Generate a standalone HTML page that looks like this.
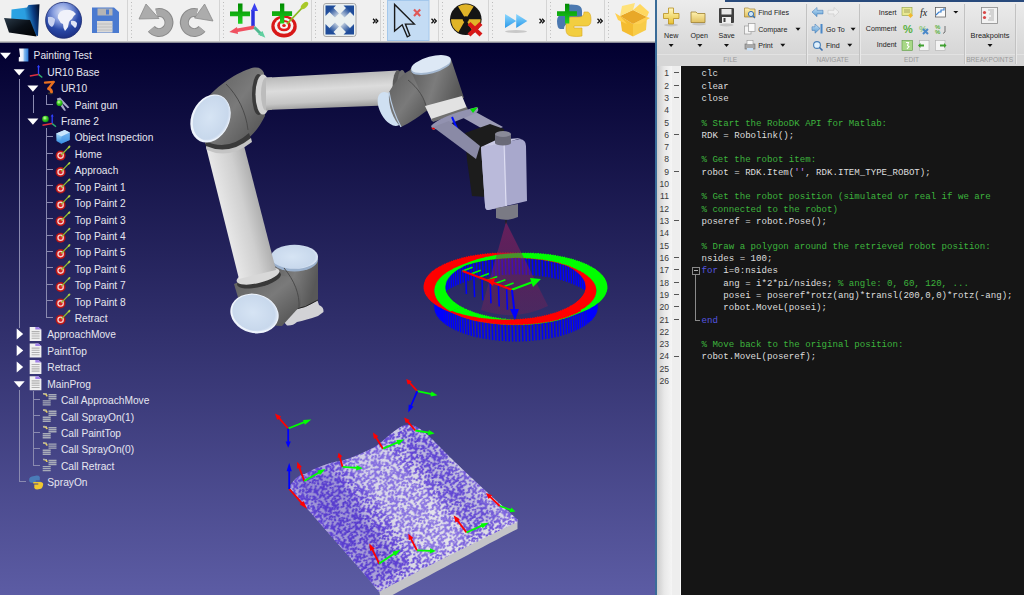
<!DOCTYPE html>
<html><head><meta charset="utf-8">
<style>
*{margin:0;padding:0;box-sizing:border-box}
html,body{width:1024px;height:595px;overflow:hidden;background:#000;font-family:"Liberation Sans",sans-serif}
#left{position:absolute;left:0;top:0;width:655px;height:595px;overflow:hidden}
#tb{position:absolute;left:0;top:0;width:655px;height:43px;background:#f0f0f0}
#view{position:absolute;left:0;top:0}
#tree{position:absolute;left:0;top:0;color:#e6e6f0;font-size:10.2px}
#tree .r{position:absolute;white-space:nowrap;line-height:12px}
#sep{position:absolute;left:655px;top:0;width:2px;height:595px;background:#3a6c98}
#ml{position:absolute;left:657px;top:0;width:367px;height:595px;overflow:hidden}
#mtb{position:absolute;left:0;top:0;width:367px;height:66px;background:linear-gradient(#ececec,#d6d6d6 82%,#cdcdcd 82%,#d2d2d2)}
#code{position:absolute;left:0;top:66px;width:367px;height:529px;background:#151515}
#gut{position:absolute;left:0;top:0;width:24px;height:529px;background:linear-gradient(90deg,#cccccc,#e8e8e8 30%,#f6f6f6 64%,#eeeeee 64%,#eeeeee 95%,#fafafa 95%)}
.ln{position:absolute;right:355px;font-size:8.6px;color:#3a3a3a;line-height:12px;text-align:right}
.dash{position:absolute;left:17px;width:5px;height:1px;background:#555}
.cl{position:absolute;left:44.5px;font-family:"Liberation Mono",monospace;font-size:9.1px;color:#dedede;white-space:pre;line-height:12px}
.cm{color:#3db43d}
.kw{color:#5656e0}
.st{color:#c080f0}
</style></head><body>
<div id="left">
<svg id="view" width="655" height="595" viewBox="0 0 655 595">
<defs>
<linearGradient id="bg" x1="0" y1="0" x2="0" y2="1">
<stop offset="0" stop-color="#020030"/>
<stop offset="1" stop-color="#5c5ca4"/>
</linearGradient>
</defs>
<rect x="0" y="43" width="655" height="552" fill="url(#bg)"/>
<path d="M379 590 C420 568 480 538 517.5 519.5 L517.5 529 C480 548 420 581 381 601 Z" fill="#c4c4c8"/>
<defs><pattern id="dotpat" patternUnits="userSpaceOnUse" width="40" height="40" patternTransform="rotate(-25)"><rect width="40" height="40" fill="#e0e0e6"/><path d="M18.1 22.4h.6M37.0 18.6h.6M20.3 23.5h.6M7.4 20.5h.6M25.2 31.7h.6M3.8 12.1h.6M3.6 32.4h.6M27.7 1.7h.6M39.3 38.6h.6M26.2 24.6h.6M6.3 0.6h.6M21.1 2.4h.6M7.6 9.7h.6M1.2 18.6h.6M17.6 33.7h.6M20.8 25.6h.6M20.0 26.5h.6M18.3 11.1h.6M39.9 39.8h.6M33.6 28.3h.6M12.6 9.2h.6M11.6 2.8h.6M30.7 16.0h.6M33.9 15.5h.6M38.3 33.9h.6M0.0 8.4h.6M36.4 18.8h.6M39.2 15.9h.6M2.9 25.2h.6M31.1 10.8h.6M3.5 13.3h.6M38.6 30.3h.6M4.7 9.9h.6M4.0 2.4h.6M31.9 7.1h.6M22.4 17.9h.6M7.6 29.3h.6M5.2 25.7h.6M4.7 16.8h.6M8.5 10.8h.6M38.8 32.1h.6M12.2 35.4h.6M8.4 15.8h.6M34.2 25.7h.6M4.0 39.6h.6M8.5 10.3h.6M30.9 13.2h.6M11.9 2.9h.6M3.6 23.3h.6M9.7 24.1h.6M14.9 18.1h.6M38.4 19.3h.6M23.0 34.7h.6M7.3 6.2h.6M36.3 32.7h.6M10.0 7.6h.6M29.6 37.6h.6M7.9 38.0h.6M35.3 24.1h.6M16.9 4.2h.6M1.5 38.5h.6M9.5 28.2h.6M10.3 32.9h.6M23.9 11.7h.6M7.0 28.8h.6M2.8 9.1h.6M22.4 34.1h.6M24.6 11.2h.6M36.7 8.2h.6M0.7 10.8h.6M17.8 2.4h.6M7.1 14.8h.6M22.9 5.3h.6M14.5 35.6h.6M39.2 26.3h.6M27.6 23.4h.6M5.6 1.4h.6M0.7 36.4h.6M28.0 38.5h.6M0.9 25.4h.6M19.3 29.2h.6M12.8 40.0h.6M3.0 21.8h.6M29.5 36.0h.6M29.5 28.1h.6M31.7 36.6h.6M14.1 27.4h.6M36.0 34.8h.6M16.7 31.6h.6M34.5 22.9h.6M25.0 15.3h.6M23.3 24.4h.6M3.2 25.6h.6M39.7 35.2h.6M29.1 15.5h.6M29.4 23.2h.6M17.6 33.5h.6M3.4 30.0h.6M1.2 24.1h.6M19.2 9.2h.6M27.9 19.9h.6M24.6 36.8h.6M10.2 0.5h.6M12.0 27.1h.6M8.1 6.8h.6M36.2 26.4h.6M17.7 35.7h.6M13.1 26.6h.6M7.9 17.2h.6M32.2 36.6h.6M35.2 15.4h.6M23.3 12.7h.6M5.4 19.9h.6M33.5 33.9h.6M28.4 38.0h.6M11.1 6.8h.6M18.0 11.0h.6M8.6 16.6h.6M25.0 19.8h.6M12.6 33.6h.6M39.3 18.1h.6M3.0 1.3h.6M34.9 1.7h.6M28.3 22.8h.6M12.4 31.7h.6M0.8 5.4h.6M18.2 1.0h.6M33.2 9.5h.6M5.6 1.9h.6M25.2 17.9h.6M25.2 26.2h.6M32.3 38.3h.6M27.4 8.0h.6M19.0 7.1h.6M0.4 18.9h.6M28.6 7.2h.6M10.9 13.8h.6M27.9 20.8h.6M24.6 30.2h.6M15.7 31.7h.6M36.2 3.5h.6M37.3 28.9h.6M5.2 18.1h.6M25.0 36.4h.6M15.1 22.8h.6M35.2 31.9h.6M37.8 18.5h.6M26.1 8.2h.6M28.9 32.7h.6M25.7 28.7h.6M8.5 36.0h.6M39.2 39.1h.6M21.5 31.6h.6M12.8 36.4h.6M34.2 13.9h.6M3.3 17.6h.6M22.0 30.7h.6M19.5 1.1h.6M32.4 2.6h.6M32.0 6.9h.6M13.4 31.5h.6M5.6 5.9h.6M20.7 28.9h.6M33.6 27.6h.6M37.8 19.7h.6M38.0 3.4h.6M8.9 21.1h.6M11.6 29.2h.6M25.6 20.9h.6M33.7 22.4h.6M12.5 15.2h.6M33.8 36.0h.6M8.3 34.0h.6M38.7 21.0h.6M22.9 8.0h.6M21.4 20.1h.6M24.2 1.1h.6M38.8 20.6h.6M16.0 32.0h.6M22.5 19.6h.6M27.6 2.6h.6M21.5 16.6h.6M38.3 36.9h.6M10.8 18.9h.6M5.1 17.3h.6M32.6 36.0h.6M19.1 12.7h.6M7.7 24.7h.6M37.0 5.2h.6M31.2 0.9h.6M7.8 9.1h.6M27.5 12.9h.6M14.2 24.8h.6M4.2 29.2h.6M4.9 20.4h.6M10.0 7.9h.6M21.2 17.5h.6M15.0 16.5h.6M21.2 6.4h.6M8.2 25.3h.6M25.5 21.2h.6M34.1 24.5h.6M34.3 9.3h.6M29.6 32.4h.6M36.1 12.6h.6M12.6 36.9h.6M8.7 39.9h.6M35.5 5.4h.6M9.6 29.1h.6M10.4 3.9h.6M33.3 16.9h.6M31.6 5.0h.6M16.1 27.4h.6M0.7 8.0h.6M27.3 36.5h.6M38.7 4.6h.6M20.2 30.3h.6M20.1 27.4h.6M7.6 2.8h.6M4.2 1.5h.6M22.1 20.6h.6M22.7 5.9h.6M7.4 8.2h.6M33.6 39.6h.6M37.1 3.8h.6M2.5 38.1h.6M18.5 30.6h.6M13.1 18.7h.6M20.6 17.2h.6M24.0 0.5h.6M28.0 33.8h.6M7.3 18.2h.6M29.6 16.2h.6M7.8 6.6h.6M20.5 0.6h.6M35.7 32.1h.6M28.2 34.4h.6M25.2 16.2h.6M24.0 20.2h.6M39.3 32.2h.6M10.3 36.5h.6M29.8 31.1h.6M32.6 16.2h.6M35.9 35.2h.6M27.8 30.7h.6M30.6 16.2h.6M28.9 2.8h.6M13.7 18.8h.6M0.4 14.2h.6M25.5 25.0h.6M9.3 37.8h.6M26.6 13.5h.6M26.4 22.8h.6M21.3 15.6h.6M40.0 25.7h.6M28.1 30.5h.6M39.2 0.9h.6M24.6 29.6h.6M10.3 16.1h.6M2.0 7.8h.6M15.0 3.9h.6M10.0 36.2h.6M22.0 20.3h.6M38.7 22.7h.6M39.8 25.5h.6M32.4 3.0h.6M23.9 30.4h.6M1.8 37.2h.6M6.4 18.9h.6M6.8 19.8h.6M24.4 2.3h.6M37.8 16.8h.6M21.1 23.9h.6M14.6 11.4h.6M26.2 22.4h.6M11.3 28.7h.6M11.8 0.6h.6M9.8 1.7h.6M6.3 30.2h.6M15.6 35.9h.6M29.9 2.0h.6M39.6 37.8h.6M2.9 36.2h.6M17.2 19.1h.6M38.9 9.7h.6M20.9 37.5h.6M28.9 18.7h.6M39.2 32.7h.6M24.1 4.6h.6M25.0 18.2h.6M8.1 2.1h.6M21.1 5.0h.6M17.7 26.7h.6M18.2 10.5h.6M23.3 16.8h.6M31.1 21.2h.6M39.9 38.1h.6M29.4 9.5h.6M4.6 35.7h.6M31.4 25.0h.6M14.4 10.9h.6M27.4 22.6h.6M23.7 25.3h.6M30.1 7.6h.6M10.0 39.2h.6M36.6 35.2h.6M1.6 2.4h.6M10.8 17.0h.6M24.9 4.1h.6M21.7 2.9h.6M3.5 27.1h.6M22.0 25.2h.6M14.9 19.1h.6M8.4 13.7h.6M29.8 33.5h.6M3.0 4.8h.6M32.4 24.9h.6M30.8 8.5h.6M17.0 10.3h.6M32.4 14.8h.6M26.1 39.6h.6M13.0 21.9h.6M29.8 36.8h.6M17.1 14.8h.6M3.9 35.0h.6M3.1 3.3h.6M22.6 19.4h.6M27.4 12.0h.6M31.0 3.0h.6M8.5 26.5h.6M27.7 41.7h.6M-0.7 -1.4h.6M-0.7 38.6h.6M39.3 -1.4h.6M6.3 40.6h.6M41.2 18.6h.6M-0.1 -0.2h.6M-0.1 39.8h.6M39.9 -0.2h.6M-1.7 33.9h.6M40.0 8.4h.6M-0.8 15.9h.6M-1.4 30.3h.6M-1.2 32.1h.6M4.0 -0.4h.6M-1.6 19.3h.6M1.5 -1.5h.6M41.5 -1.5h.6M41.5 38.5h.6M40.7 10.8h.6M-0.8 26.3h.6M5.6 41.4h.6M40.7 36.4h.6M28.0 -1.5h.6M40.9 25.4h.6M12.8 0.0h.6M-0.3 35.2h.6M41.2 24.1h.6M10.2 40.5h.6M-0.7 18.1h.6M3.0 41.3h.6M34.9 41.7h.6M40.8 5.4h.6M18.2 41.0h.6M5.6 41.9h.6M32.3 -1.7h.6M40.4 18.9h.6M-0.8 -0.9h.6M-0.8 39.1h.6M39.2 -0.9h.6M19.5 41.1h.6M-1.3 21.0h.6M24.2 41.1h.6M-1.2 20.6h.6M-1.7 36.9h.6M31.2 40.9h.6M8.7 -0.1h.6M40.7 8.0h.6M-1.3 4.6h.6M4.2 41.5h.6M33.6 -0.4h.6M2.5 -1.9h.6M24.0 40.5h.6M20.5 40.6h.6M-0.7 32.2h.6M40.4 14.2h.6M0.0 25.7h.6M-0.8 0.9h.6M-0.8 40.9h.6M39.2 40.9h.6M-1.3 22.7h.6M-0.2 25.5h.6M41.8 37.2h.6M11.8 40.6h.6M9.8 41.7h.6M-0.4 37.8h.6M-1.1 9.7h.6M-0.8 32.7h.6M-0.1 -1.9h.6M-0.1 38.1h.6M39.9 -1.9h.6M10.0 -0.8h.6M41.6 2.4h.6M26.1 -0.4h.6" stroke="#6446d8" stroke-width="1.8" stroke-linecap="round"/></pattern></defs>
<path d="M289 487 C295 478 300 474 305 474 C315 468 330 462 341 461 C352 458 365 452 375 446.7 C385 440 395 428 405 425 C415 423 425 432 432 439 C460 468 490 495 517.5 519.5 L517.5 522 C480 540 420 570 379 592 C355 562 320 525 289 487 Z" fill="url(#dotpat)"/>
<defs><linearGradient id="surfwash" x1="0" y1="0" x2="1" y2="0.2"><stop offset="0" stop-color="#5a48d0" stop-opacity="0.35"/><stop offset="0.5" stop-color="#5a48d0" stop-opacity="0.1"/><stop offset="1" stop-color="#fff" stop-opacity="0.05"/></linearGradient></defs>
<path d="M289 487 C295 478 300 474 305 474 C315 468 330 462 341 461 C352 458 365 452 375 446.7 C385 440 395 428 405 425 C415 423 425 432 432 439 C460 468 490 495 517.5 519.5 L517.5 522 C480 540 420 570 379 592 C355 562 320 525 289 487 Z" fill="url(#surfwash)"/>
<defs><filter id="blurw" x="-50%" y="-50%" width="200%" height="200%"><feGaussianBlur stdDeviation="4"/></filter><clipPath id="sclip"><path d="M289 487 C295 478 300 474 305 474 C315 468 330 462 341 461 C352 458 365 452 375 446.7 C385 440 395 428 405 425 C415 423 425 432 432 439 C460 468 490 495 517.5 519.5 L517.5 522 C480 540 420 570 379 592 C355 562 320 525 289 487 Z"/></clipPath></defs>
<g clip-path="url(#sclip)" filter="url(#blurw)"><path d="M293 482 L328 466 L405 565 L372 590 Z" fill="#3a28b8" opacity="0.28"/><path d="M342 462 L385 445 L470 540 L425 562 Z" fill="#ffffff" opacity="0.22"/><path d="M398 432 L428 432 L505 515 L470 535 Z" fill="#3a28b8" opacity="0.18"/><path d="M440 445 L517 519 L500 525 Z" fill="#ffffff" opacity="0.15"/></g>
<path d="M288.2 428.5L278.7 417.6" stroke="#ff0000" stroke-width="1.8"/><path d="M275.0 413.4L281.2 416.5L277.3 419.9Z" fill="#ff0000"/><path d="M288.2 428.5L304.9 421.9" stroke="#00ff00" stroke-width="1.8"/><path d="M311.4 419.4L304.9 424.7L303.0 419.9Z" fill="#00ff00"/><path d="M288.2 428.5L288.2 442.3" stroke="#0000ff" stroke-width="1.8"/><path d="M288.2 447.7L285.6 441.6L290.8 441.6Z" fill="#0000ff"/><path d="M417.3 391.2L409.3 382.4" stroke="#ff0000" stroke-width="1.8"/><path d="M406.2 379.0L411.7 381.2L407.8 384.7Z" fill="#ff0000"/><path d="M417.3 391.2L431.8 394.1" stroke="#00ff00" stroke-width="1.8"/><path d="M437.5 395.2L430.5 396.5L431.5 391.4Z" fill="#00ff00"/><path d="M417.3 391.2L410.7 406.5" stroke="#0000ff" stroke-width="1.8"/><path d="M408.2 412.4L408.7 404.6L413.5 406.6Z" fill="#0000ff"/><path d="M289.2 489.0L302.2 503.4" stroke="#ff0000" stroke-width="1.8"/><path d="M307.3 509.0L299.6 504.3L303.4 500.9Z" fill="#ff0000"/><path d="M289.2 489.0L289.2 489.0" stroke="#00ff00" stroke-width="1.8"/><path d="M289.2 489.0L287.4 487.2L291.0 490.8Z" fill="#00ff00"/><path d="M289.2 489.0L289.2 470.1" stroke="#0000ff" stroke-width="1.8"/><path d="M289.2 462.8L291.8 471.2L286.6 471.2Z" fill="#0000ff"/><path d="M304.3 481.0L299.2 467.2" stroke="#ff0000" stroke-width="1.8"/><path d="M297.2 461.8L301.9 467.0L297.0 468.8Z" fill="#ff0000"/><path d="M304.3 481.0L319.6 472.3" stroke="#00ff00" stroke-width="1.8"/><path d="M325.5 468.9L320.0 475.0L317.4 470.5Z" fill="#00ff00"/><path d="M342.6 466.9L339.7 456.7" stroke="#ff0000" stroke-width="1.8"/><path d="M338.6 452.7L342.4 456.5L337.4 457.9Z" fill="#ff0000"/><path d="M342.6 466.9L357.1 467.9" stroke="#00ff00" stroke-width="1.8"/><path d="M362.8 468.3L356.2 470.4L356.5 465.3Z" fill="#00ff00"/><path d="M383.0 448.7L375.7 437.0" stroke="#ff0000" stroke-width="1.8"/><path d="M372.9 432.5L378.3 436.3L373.9 439.1Z" fill="#ff0000"/><path d="M383.0 448.7L398.3 442.1" stroke="#00ff00" stroke-width="1.8"/><path d="M404.2 439.6L398.4 444.9L396.4 440.1Z" fill="#00ff00"/><path d="M415.3 430.5L407.3 421.1" stroke="#ff0000" stroke-width="1.8"/><path d="M404.2 417.4L409.7 419.9L405.8 423.3Z" fill="#ff0000"/><path d="M415.3 430.5L429.1 432.7" stroke="#00ff00" stroke-width="1.8"/><path d="M434.5 433.6L427.9 435.2L428.8 430.0Z" fill="#00ff00"/><path d="M499.8 506.0L489.9 496.6" stroke="#ff0000" stroke-width="1.8"/><path d="M486.0 493.0L492.2 495.3L488.6 499.1Z" fill="#ff0000"/><path d="M499.8 506.0L511.1 510.0" stroke="#00ff00" stroke-width="1.8"/><path d="M515.5 511.6L509.6 512.3L511.3 507.4Z" fill="#00ff00"/><path d="M466.5 532.5L457.2 520.1" stroke="#ff0000" stroke-width="1.8"/><path d="M453.6 515.3L459.8 519.2L455.6 522.4Z" fill="#ff0000"/><path d="M466.5 532.5L482.5 525.4" stroke="#00ff00" stroke-width="1.8"/><path d="M488.7 522.7L482.6 528.2L480.5 523.5Z" fill="#00ff00"/><path d="M417.0 550.4L410.7 538.4" stroke="#ff0000" stroke-width="1.8"/><path d="M408.3 533.8L413.4 537.9L408.8 540.3Z" fill="#ff0000"/><path d="M417.0 550.4L430.7 550.8" stroke="#00ff00" stroke-width="1.8"/><path d="M436.0 551.0L429.8 553.4L430.0 548.2Z" fill="#00ff00"/><path d="M379.2 563.5L372.1 549.1" stroke="#ff0000" stroke-width="1.8"/><path d="M369.3 543.5L374.8 548.7L370.1 551.1Z" fill="#ff0000"/><path d="M379.2 563.5L394.8 553.3" stroke="#00ff00" stroke-width="1.8"/><path d="M400.8 549.4L395.3 556.1L392.5 551.7Z" fill="#00ff00"/>
<defs>
<linearGradient id="tubeL" gradientUnits="userSpaceOnUse" x1="207" y1="200" x2="262" y2="186">
<stop offset="0" stop-color="#d4d4d4"/><stop offset="0.2" stop-color="#e8e8e8"/><stop offset="0.6" stop-color="#cfcfcf"/><stop offset="1" stop-color="#a0a0a0"/>
</linearGradient>
<linearGradient id="tubeU" gradientUnits="userSpaceOnUse" x1="330" y1="72" x2="332" y2="108">
<stop offset="0" stop-color="#b4b4b4"/><stop offset="0.45" stop-color="#dcdcdc"/><stop offset="0.8" stop-color="#c6c6c6"/><stop offset="1" stop-color="#9a9a9a"/>
</linearGradient>
<linearGradient id="dgray" x1="0" y1="0" x2="1" y2="1">
<stop offset="0" stop-color="#5c5c5c"/><stop offset="0.5" stop-color="#7a7a7a"/><stop offset="1" stop-color="#4c4c4c"/>
</linearGradient>
<linearGradient id="dgray2" x1="0" y1="0" x2="1" y2="0.3">
<stop offset="0" stop-color="#5a5a5a"/><stop offset="0.55" stop-color="#7c7c7c"/><stop offset="1" stop-color="#585858"/>
</linearGradient>
<radialGradient id="cap" cx="0.45" cy="0.5" r="0.6">
<stop offset="0" stop-color="#d6e4f4"/><stop offset="0.8" stop-color="#c8d8ec"/><stop offset="1" stop-color="#eef4ff"/>
</radialGradient>
<linearGradient id="gun" x1="0" y1="0" x2="1" y2="0">
<stop offset="0" stop-color="#9a9ac0"/><stop offset="0.3" stop-color="#c8c8e4"/><stop offset="1" stop-color="#b4b4d4"/>
</linearGradient>
<linearGradient id="cone" x1="0" y1="0" x2="0" y2="1">
<stop offset="0" stop-color="#a02060" stop-opacity="0.55"/><stop offset="1" stop-color="#802050" stop-opacity="0.35"/>
</linearGradient>
</defs>
<!-- base flange -->
<path d="M283 321 Q282 316 286 314 L292 309 Q306 307 317 299 L319 305 Q324 307 323.5 312 L318 316 Q306 320 297 322 Q293 326 287 325.5 Z" fill="#d2d2d6"/>
<!-- base vertical body -->
<path d="M271 257 L318 257 L318 300 Q306 308 292 310 L271 300 Z" fill="url(#dgray2)"/><path d="M292 310 Q306 308 318 300" stroke="#1a1a1a" stroke-width="0.9" fill="none"/>
<ellipse cx="294.5" cy="259.5" rx="23.5" ry="12" fill="#9ab0cc"/>
<ellipse cx="294.5" cy="256.8" rx="23.5" ry="12" fill="url(#cap)"/>
<!-- shoulder horizontal body -->
<path d="M234 284 L262 272 L300 279 L301 305 L282 326 L246 324 Z" fill="url(#dgray)"/>
<path d="M284 268 C294 280 300 294 299 308" stroke="#4a4a4a" stroke-width="1" fill="none"/>
<ellipse cx="259" cy="279.5" rx="22.5" ry="7.5" transform="rotate(-14 259 279.5)" fill="#383838"/>
<ellipse cx="258" cy="276" rx="22" ry="7" transform="rotate(-14 258 276)" fill="#d8d8d8"/>
<!-- lower arm tube -->
<path d="M206 147 L242 138 L276 270 L239 279 Z" fill="url(#tubeL)"/>
<ellipse cx="254.5" cy="313.5" rx="24.5" ry="19.5" transform="rotate(15 254.5 313.5)" fill="#eef4fc"/>
<ellipse cx="255" cy="313" rx="23" ry="18" transform="rotate(15 255 313)" fill="url(#cap)"/>
<!-- elbow -->
<path d="M204 102 C214 88 234 74 249 69 C257 66 262 68 264 73 L265 116 C260 126 254 134 246 140 C235 147 220 148 205 144 Z" fill="url(#dgray)"/>
<path d="M226 84 C238 96 246 112 248 130" stroke="#4a4a4a" stroke-width="1" fill="none"/>
<path d="M205 141 Q228 152 249 133 L251 139 Q229 157 206 147 Z" fill="#3a3a3a"/>
<path d="M206 146 Q229 156 251 138 L252 142 Q229 160 207 150 Z" fill="#c4c4c4"/>
<!-- upper arm tube -->
<path d="M265 77.8 L398 70.5 L398 105 L265 110 Z" fill="url(#tubeU)"/>
<ellipse cx="258.5" cy="94.5" rx="6.5" ry="20.5" fill="#3a3a3a"/>
<ellipse cx="263" cy="94.5" rx="7.5" ry="20" fill="#d4d4d4"/>
<ellipse cx="266" cy="94" rx="5" ry="16.5" fill="#bcbcbc"/>
<path d="M266 77.6 L272 77.3 L272 109.7 L266 110.5 Z" fill="url(#tubeU)"/>
<ellipse cx="210.5" cy="118.5" rx="19" ry="25" transform="rotate(25 210.5 118.5)" fill="#eef4fc"/>
<ellipse cx="211.5" cy="118" rx="17.5" ry="23.5" transform="rotate(25 211.5 118)" fill="url(#cap)"/>
<!-- wrist 1 -->
<ellipse cx="398" cy="87.8" rx="5.5" ry="17.6" fill="#5a5a5a"/><ellipse cx="402" cy="87" rx="5" ry="17" fill="#707070"/>
<ellipse cx="390" cy="109" rx="10" ry="18.5" transform="rotate(-28 390 109)" fill="#cfe0f2"/>
<path d="M389 92 C396 80 404 73 412 69 L430 108 C420 116 410 123 401 127 C393 120 388 106 389 92 Z" fill="url(#dgray)"/>
<path d="M389 92 C391 104 395 116 401 127" stroke="#b8cce4" stroke-width="1.2" fill="none"/>
<!-- wrist 2 -->
<path d="M410 69 L451 59 L464 98 L428 109 Z" fill="url(#dgray2)"/>
<path d="M408 80 C418 88 425 98 427 110" stroke="#444" stroke-width="0.8" fill="none"/>
<ellipse cx="431" cy="66" rx="20.5" ry="7.5" transform="rotate(-15 431 66)" fill="#a4b8d0"/>
<ellipse cx="431" cy="64" rx="20.5" ry="7.5" transform="rotate(-15 431 64)" fill="#dde8f5"/>
<!-- wrist 3 flange -->
<path d="M425 106 L462 96 L467 108 L432 121 Z" fill="#e2e2e2"/>
<path d="M431 119 L467 107 L468 110 L433 122 Z" fill="#707070"/>
<!-- right bracket bar -->
<path d="M458 115 L472 110 L503 127 L490 133 Z" fill="#9c9cb6"/>
<!-- tool plate -->
<path d="M431 126 Q440 116 477 107 Q480 110 476 113 Q450 124 433 130 Z" fill="#9292b0"/>
<path d="M452 117 L458 131" stroke="#0010ff" stroke-width="2"/>
<path d="M470 109 L478 107 L473 113 Z" fill="#00e000"/>
<path d="M431 128 L436 127 L434 130 Z" fill="#e00000"/>
<!-- black box -->
<path d="M465 133 L490 124 L504 129 L504 146 L486 151 L487 197 L472 196 L467 160 Z" fill="#1c1c1c"/>
<!-- left bracket bar -->
<path d="M433 127 L449 121 L480 146 L476 159 Z" fill="#8a8aa6"/>
<!-- gun body -->
<path d="M481 147 L520 139 Q526 140 526 146 L527 201 L488 210 Q485 210 485 205 Z" fill="#a8a8cc"/>
<path d="M481 147 L505 142 L507 206 L488 210 Q485 210 485 205 Z" fill="#babada"/>
<path d="M481 147 L496 140 L521 138 L505 143 Z" fill="#cacae4"/>
<path d="M504 143 L506 206" stroke="#e0e0f4" stroke-width="1"/>
<rect x="495" y="134" width="16" height="9" fill="#6a6a78"/>
<ellipse cx="503" cy="143" rx="8" ry="2.5" fill="#6a6a78"/>
<ellipse cx="503" cy="134" rx="8" ry="3" fill="#8a8a98"/>
<!-- nozzle -->
<path d="M496 208 L518 204 L518 217 Q507 222 496 218 Z" fill="#7a7a84"/>
<path d="M506 220 L506 224" stroke="#222" stroke-width="1.5"/>

<g fill="none"><path d="M596.5 291.7l0.6 17.0M596.3 293.1l0.6 17.0M596.1 294.5l0.6 17.0M595.6 295.9l0.6 17.0M595.1 297.3l0.6 17.0M594.4 298.6l0.6 17.0M593.5 300.0l0.6 17.0M592.5 301.4l0.6 17.0M591.4 302.7l0.6 17.0M590.2 304.0l0.6 17.0M588.8 305.3l0.6 17.0M587.3 306.5l0.6 17.0M585.6 307.8l0.6 17.0M583.9 309.0l0.6 17.0M582.0 310.1l0.6 17.0M580.0 311.3l0.6 17.0M577.9 312.4l0.6 17.0M575.7 313.4l0.6 17.0M573.4 314.4l0.6 17.0M570.9 315.4l0.6 17.0M568.4 316.4l0.6 17.0M565.8 317.3l0.6 17.0M563.1 318.1l0.6 17.0M560.3 318.9l0.6 17.0M557.5 319.7l0.6 17.0M554.5 320.4l0.6 17.0M551.5 321.0l0.6 17.0M548.4 321.6l0.6 17.0M545.3 322.1l0.6 17.0M542.1 322.6l0.6 17.0M538.9 323.1l0.6 17.0M535.6 323.4l0.6 17.0M532.3 323.8l0.6 17.0M529.0 324.0l0.6 17.0M525.7 324.2l0.6 17.0M522.3 324.4l0.6 17.0M518.9 324.5l0.6 17.0M515.5 324.5l0.6 17.0M512.1 324.5l0.6 17.0M508.7 324.4l0.6 17.0M505.3 324.2l0.6 17.0M502.0 324.0l0.6 17.0M498.7 323.8l0.6 17.0M495.4 323.4l0.6 17.0M492.1 323.1l0.6 17.0M488.9 322.6l0.6 17.0M485.7 322.1l0.6 17.0M482.6 321.6l0.6 17.0M479.5 321.0l0.6 17.0M476.5 320.4l0.6 17.0M473.5 319.7l0.6 17.0M470.7 318.9l0.6 17.0M467.9 318.1l0.6 17.0M465.2 317.3l0.6 17.0M462.6 316.4l0.6 17.0M460.1 315.4l0.6 17.0M457.6 314.4l0.6 17.0M455.3 313.4l0.6 17.0M453.1 312.4l0.6 17.0M451.0 311.3l0.6 17.0M449.0 310.1l0.6 17.0M447.1 309.0l0.6 17.0M445.4 307.8l0.6 17.0M443.7 306.5l0.6 17.0M442.2 305.3l0.6 17.0M440.8 304.0l0.6 17.0M439.6 302.7l0.6 17.0M438.5 301.4l0.6 17.0M437.5 300.0l0.6 17.0M436.6 298.6l0.6 17.0M435.9 297.3l0.6 17.0M435.4 295.9l0.6 17.0M434.9 294.5l0.6 17.0M434.7 293.1l0.6 17.0M434.5 291.7l0.6 17.0M434.5 290.3l0.6 17.0M434.7 288.9l0.6 17.0M434.9 287.5l0.6 17.0M435.4 286.1l0.6 17.0M435.9 284.7l0.6 17.0M436.6 283.4l0.6 17.0M437.5 282.0l0.6 17.0M438.5 280.6l0.6 17.0M439.6 279.3l0.6 17.0M440.8 278.0l0.6 17.0M442.2 276.7l0.6 17.0M443.7 275.5l0.6 17.0M445.4 274.2l0.6 17.0M447.1 273.0l0.6 17.0M449.0 271.9l0.6 17.0M451.0 270.7l0.6 17.0M453.1 269.6l0.6 17.0M455.3 268.6l0.6 17.0M457.6 267.6l0.6 17.0M460.1 266.6l0.6 17.0M462.6 265.6l0.6 17.0M465.2 264.7l0.6 17.0M467.9 263.9l0.6 17.0M470.7 263.1l0.6 17.0M473.5 262.3l0.6 17.0M476.5 261.6l0.6 17.0M479.5 261.0l0.6 17.0M482.6 260.4l0.6 17.0M485.7 259.9l0.6 17.0M488.9 259.4l0.6 17.0M492.1 258.9l0.6 17.0M495.4 258.6l0.6 17.0M498.7 258.2l0.6 17.0M502.0 258.0l0.6 17.0M505.3 257.8l0.6 17.0M508.7 257.6l0.6 17.0M512.1 257.5l0.6 17.0M515.5 257.5l0.6 17.0M518.9 257.5l0.6 17.0M522.3 257.6l0.6 17.0M525.7 257.8l0.6 17.0M529.0 258.0l0.6 17.0M532.3 258.2l0.6 17.0M535.6 258.6l0.6 17.0M538.9 258.9l0.6 17.0M542.1 259.4l0.6 17.0M545.3 259.9l0.6 17.0M548.4 260.4l0.6 17.0M551.5 261.0l0.6 17.0M554.5 261.6l0.6 17.0M557.5 262.3l0.6 17.0M560.3 263.1l0.6 17.0M563.1 263.9l0.6 17.0M565.8 264.7l0.6 17.0M568.4 265.6l0.6 17.0M570.9 266.6l0.6 17.0M573.4 267.6l0.6 17.0M575.7 268.6l0.6 17.0M577.9 269.6l0.6 17.0M580.0 270.7l0.6 17.0M582.0 271.9l0.6 17.0M583.9 273.0l0.6 17.0M585.6 274.2l0.6 17.0M587.3 275.5l0.6 17.0M588.8 276.7l0.6 17.0M590.2 278.0l0.6 17.0M591.4 279.3l0.6 17.0M592.5 280.6l0.6 17.0M593.5 282.0l0.6 17.0M594.4 283.4l0.6 17.0M595.1 284.7l0.6 17.0M595.6 286.1l0.6 17.0M596.1 287.5l0.6 17.0M596.3 288.9l0.6 17.0M596.5 290.3l0.6 17.0" stroke="#0000ff" stroke-width="1.5"/><path d="M579.5 311.5l10.8 -4.2M577.9 312.4l10.8 -4.2M576.3 313.2l10.8 -4.2M574.5 313.9l10.8 -4.2M572.8 314.7l10.8 -4.2M570.9 315.4l10.8 -4.2M569.1 316.1l10.8 -4.2M567.1 316.8l10.8 -4.2M565.1 317.5l10.8 -4.2M563.1 318.1l10.8 -4.2M561.0 318.7l10.8 -4.2M558.9 319.3l10.8 -4.2M556.7 319.8l10.8 -4.2M554.5 320.4l10.8 -4.2M552.3 320.8l10.8 -4.2M550.0 321.3l10.8 -4.2M547.7 321.7l10.8 -4.2M545.3 322.1l10.8 -4.2M542.9 322.5l10.8 -4.2M540.5 322.9l10.8 -4.2M538.1 323.2l10.8 -4.2M535.6 323.4l10.8 -4.2M533.2 323.7l10.8 -4.2M530.7 323.9l10.8 -4.2M528.2 324.1l10.8 -4.2M525.7 324.2l10.8 -4.2M523.1 324.4l10.8 -4.2M520.6 324.4l10.8 -4.2M518.0 324.5l10.8 -4.2M515.5 324.5l10.8 -4.2M513.0 324.5l10.8 -4.2M510.4 324.4l10.8 -4.2M507.9 324.4l10.8 -4.2M505.3 324.2l10.8 -4.2M502.8 324.1l10.8 -4.2M500.3 323.9l10.8 -4.2M497.8 323.7l10.8 -4.2M495.4 323.4l10.8 -4.2M492.9 323.2l10.8 -4.2M490.5 322.9l10.8 -4.2M488.1 322.5l10.8 -4.2M485.7 322.1l10.8 -4.2M483.3 321.7l10.8 -4.2M481.0 321.3l10.8 -4.2M478.7 320.8l10.8 -4.2M476.5 320.4l10.8 -4.2M474.3 319.8l10.8 -4.2M472.1 319.3l10.8 -4.2M470.0 318.7l10.8 -4.2M467.9 318.1l10.8 -4.2M465.9 317.5l10.8 -4.2M463.9 316.8l10.8 -4.2M461.9 316.1l10.8 -4.2M460.1 315.4l10.8 -4.2M458.2 314.7l10.8 -4.2M456.5 313.9l10.8 -4.2M454.7 313.2l10.8 -4.2M453.1 312.4l10.8 -4.2M451.5 311.5l10.8 -4.2" stroke="#00ff00" stroke-width="1.8"/><path d="M596.5 291.0l-10.8 -4.5M596.5 292.1l-10.8 -4.5M596.3 293.1l-10.8 -4.5M596.1 294.2l-10.8 -4.5M595.9 295.2l-10.8 -4.5M595.5 296.2l-10.8 -4.5M595.1 297.3l-10.8 -4.5M594.5 298.3l-10.8 -4.5M594.0 299.3l-10.8 -4.5M593.3 300.3l-10.8 -4.5M592.5 301.4l-10.8 -4.5M591.7 302.3l-10.8 -4.5M590.8 303.3l-10.8 -4.5M589.8 304.3l-10.8 -4.5M588.8 305.3l-10.8 -4.5M587.7 306.2l-10.8 -4.5M586.5 307.1l-10.8 -4.5M585.2 308.1l-10.8 -4.5M583.9 309.0l-10.8 -4.5M582.5 309.8l-10.8 -4.5M581.0 310.7l-10.8 -4.5M579.5 311.5l-10.8 -4.5M577.9 312.4l-10.8 -4.5M576.3 313.2l-10.8 -4.5M574.5 313.9l-10.8 -4.5M572.8 314.7l-10.8 -4.5M570.9 315.4l-10.8 -4.5M569.1 316.1l-10.8 -4.5M567.1 316.8l-10.8 -4.5M565.1 317.5l-10.8 -4.5M563.1 318.1l-10.8 -4.5M561.0 318.7l-10.8 -4.5M558.9 319.3l-10.8 -4.5M556.7 319.8l-10.8 -4.5M554.5 320.4l-10.8 -4.5M552.3 320.8l-10.8 -4.5M550.0 321.3l-10.8 -4.5M547.7 321.7l-10.8 -4.5M545.3 322.1l-10.8 -4.5M542.9 322.5l-10.8 -4.5M540.5 322.9l-10.8 -4.5M538.1 323.2l-10.8 -4.5M535.6 323.4l-10.8 -4.5M533.2 323.7l-10.8 -4.5M530.7 323.9l-10.8 -4.5M528.2 324.1l-10.8 -4.5M525.7 324.2l-10.8 -4.5M523.1 324.4l-10.8 -4.5M520.6 324.4l-10.8 -4.5M518.0 324.5l-10.8 -4.5M515.5 324.5l-10.8 -4.5M513.0 324.5l-10.8 -4.5M510.4 324.4l-10.8 -4.5M507.9 324.4l-10.8 -4.5M505.3 324.2l-10.8 -4.5M502.8 324.1l-10.8 -4.5M500.3 323.9l-10.8 -4.5M497.8 323.7l-10.8 -4.5M495.4 323.4l-10.8 -4.5M492.9 323.2l-10.8 -4.5M490.5 322.9l-10.8 -4.5M488.1 322.5l-10.8 -4.5M485.7 322.1l-10.8 -4.5M483.3 321.7l-10.8 -4.5M481.0 321.3l-10.8 -4.5M478.7 320.8l-10.8 -4.5M476.5 320.4l-10.8 -4.5M474.3 319.8l-10.8 -4.5M472.1 319.3l-10.8 -4.5M470.0 318.7l-10.8 -4.5M467.9 318.1l-10.8 -4.5M465.9 317.5l-10.8 -4.5M463.9 316.8l-10.8 -4.5M461.9 316.1l-10.8 -4.5M460.1 315.4l-10.8 -4.5M458.2 314.7l-10.8 -4.5M456.5 313.9l-10.8 -4.5M454.7 313.2l-10.8 -4.5M453.1 312.4l-10.8 -4.5M451.5 311.5l-10.8 -4.5M450.0 310.7l-10.8 -4.5M448.5 309.8l-10.8 -4.5M447.1 309.0l-10.8 -4.5M445.8 308.1l-10.8 -4.5M444.5 307.1l-10.8 -4.5M443.3 306.2l-10.8 -4.5M442.2 305.3l-10.8 -4.5M441.2 304.3l-10.8 -4.5M440.2 303.3l-10.8 -4.5M439.3 302.3l-10.8 -4.5M438.5 301.4l-10.8 -4.5M437.7 300.3l-10.8 -4.5M437.0 299.3l-10.8 -4.5M436.5 298.3l-10.8 -4.5M435.9 297.3l-10.8 -4.5M435.5 296.2l-10.8 -4.5M435.1 295.2l-10.8 -4.5M434.9 294.2l-10.8 -4.5M434.7 293.1l-10.8 -4.5M434.5 292.1l-10.8 -4.5M434.5 291.0l-10.8 -4.5M434.5 289.9l-10.8 -4.5M434.7 288.9l-10.8 -4.5M434.9 287.8l-10.8 -4.5M435.1 286.8l-10.8 -4.5M435.5 285.8l-10.8 -4.5M435.9 284.7l-10.8 -4.5M436.5 283.7l-10.8 -4.5M437.0 282.7l-10.8 -4.5M437.7 281.7l-10.8 -4.5M438.5 280.6l-10.8 -4.5M439.3 279.7l-10.8 -4.5M440.2 278.7l-10.8 -4.5M441.2 277.7l-10.8 -4.5M442.2 276.7l-10.8 -4.5M443.3 275.8l-10.8 -4.5M444.5 274.9l-10.8 -4.5M445.8 273.9l-10.8 -4.5M447.1 273.0l-10.8 -4.5M448.5 272.2l-10.8 -4.5M450.0 271.3l-10.8 -4.5M451.5 270.5l-10.8 -4.5M453.1 269.6l-10.8 -4.5M454.7 268.8l-10.8 -4.5M456.5 268.1l-10.8 -4.5M458.2 267.3l-10.8 -4.5M460.1 266.6l-10.8 -4.5M461.9 265.9l-10.8 -4.5M463.9 265.2l-10.8 -4.5M465.9 264.5l-10.8 -4.5M467.9 263.9l-10.8 -4.5M470.0 263.3l-10.8 -4.5M472.1 262.7l-10.8 -4.5M474.3 262.2l-10.8 -4.5M476.5 261.6l-10.8 -4.5M478.7 261.2l-10.8 -4.5M481.0 260.7l-10.8 -4.5M483.3 260.3l-10.8 -4.5M485.7 259.9l-10.8 -4.5M488.1 259.5l-10.8 -4.5M490.5 259.1l-10.8 -4.5M492.9 258.8l-10.8 -4.5M495.4 258.6l-10.8 -4.5M497.8 258.3l-10.8 -4.5M500.3 258.1l-10.8 -4.5M502.8 257.9l-10.8 -4.5M505.3 257.8l-10.8 -4.5M507.9 257.6l-10.8 -4.5M510.4 257.6l-10.8 -4.5M513.0 257.5l-10.8 -4.5M515.5 257.5l-10.8 -4.5M518.0 257.5l-10.8 -4.5M520.6 257.6l-10.8 -4.5M523.1 257.6l-10.8 -4.5M525.7 257.8l-10.8 -4.5M528.2 257.9l-10.8 -4.5M530.7 258.1l-10.8 -4.5M533.2 258.3l-10.8 -4.5M535.6 258.6l-10.8 -4.5M538.1 258.8l-10.8 -4.5M540.5 259.1l-10.8 -4.5M542.9 259.5l-10.8 -4.5M545.3 259.9l-10.8 -4.5M547.7 260.3l-10.8 -4.5M550.0 260.7l-10.8 -4.5M552.3 261.2l-10.8 -4.5M554.5 261.6l-10.8 -4.5M556.7 262.2l-10.8 -4.5M558.9 262.7l-10.8 -4.5M561.0 263.3l-10.8 -4.5M563.1 263.9l-10.8 -4.5M565.1 264.5l-10.8 -4.5M567.1 265.2l-10.8 -4.5M569.1 265.9l-10.8 -4.5M570.9 266.6l-10.8 -4.5M572.8 267.3l-10.8 -4.5M574.5 268.1l-10.8 -4.5M576.3 268.8l-10.8 -4.5M577.9 269.6l-10.8 -4.5M579.5 270.5l-10.8 -4.5M581.0 271.3l-10.8 -4.5M582.5 272.2l-10.8 -4.5M583.9 273.0l-10.8 -4.5M585.2 273.9l-10.8 -4.5M586.5 274.9l-10.8 -4.5M587.7 275.8l-10.8 -4.5M588.8 276.7l-10.8 -4.5M589.8 277.7l-10.8 -4.5M590.8 278.7l-10.8 -4.5M591.7 279.7l-10.8 -4.5M592.5 280.6l-10.8 -4.5M593.3 281.7l-10.8 -4.5M594.0 282.7l-10.8 -4.5M594.5 283.7l-10.8 -4.5M595.1 284.7l-10.8 -4.5M595.5 285.8l-10.8 -4.5M595.9 286.8l-10.8 -4.5M596.1 287.8l-10.8 -4.5M596.3 288.9l-10.8 -4.5M596.5 289.9l-10.8 -4.5" stroke="#ff0000" stroke-width="1.8"/><path d="M596.5 291.0l10.8 -4.2M596.5 292.1l10.8 -4.2M596.3 293.1l10.8 -4.2M596.1 294.2l10.8 -4.2M595.9 295.2l10.8 -4.2M595.5 296.2l10.8 -4.2M595.1 297.3l10.8 -4.2M594.5 298.3l10.8 -4.2M594.0 299.3l10.8 -4.2M593.3 300.3l10.8 -4.2M592.5 301.4l10.8 -4.2M591.7 302.3l10.8 -4.2M590.8 303.3l10.8 -4.2M589.8 304.3l10.8 -4.2M588.8 305.3l10.8 -4.2M587.7 306.2l10.8 -4.2M586.5 307.1l10.8 -4.2M585.2 308.1l10.8 -4.2M583.9 309.0l10.8 -4.2M582.5 309.8l10.8 -4.2M581.0 310.7l10.8 -4.2M450.0 310.7l10.8 -4.2M448.5 309.8l10.8 -4.2M447.1 309.0l10.8 -4.2M445.8 308.1l10.8 -4.2M444.5 307.1l10.8 -4.2M443.3 306.2l10.8 -4.2M442.2 305.3l10.8 -4.2M441.2 304.3l10.8 -4.2M440.2 303.3l10.8 -4.2M439.3 302.3l10.8 -4.2M438.5 301.4l10.8 -4.2M437.7 300.3l10.8 -4.2M437.0 299.3l10.8 -4.2M436.5 298.3l10.8 -4.2M435.9 297.3l10.8 -4.2M435.5 296.2l10.8 -4.2M435.1 295.2l10.8 -4.2M434.9 294.2l10.8 -4.2M434.7 293.1l10.8 -4.2M434.5 292.1l10.8 -4.2M434.5 291.0l10.8 -4.2M434.5 289.9l10.8 -4.2M434.7 288.9l10.8 -4.2M434.9 287.8l10.8 -4.2M435.1 286.8l10.8 -4.2M435.5 285.8l10.8 -4.2M435.9 284.7l10.8 -4.2M436.5 283.7l10.8 -4.2M437.0 282.7l10.8 -4.2M437.7 281.7l10.8 -4.2M438.5 280.6l10.8 -4.2M439.3 279.7l10.8 -4.2M440.2 278.7l10.8 -4.2M441.2 277.7l10.8 -4.2M442.2 276.7l10.8 -4.2M443.3 275.8l10.8 -4.2M444.5 274.9l10.8 -4.2M445.8 273.9l10.8 -4.2M447.1 273.0l10.8 -4.2M448.5 272.2l10.8 -4.2M450.0 271.3l10.8 -4.2M451.5 270.5l10.8 -4.2M453.1 269.6l10.8 -4.2M454.7 268.8l10.8 -4.2M456.5 268.1l10.8 -4.2M458.2 267.3l10.8 -4.2M460.1 266.6l10.8 -4.2M461.9 265.9l10.8 -4.2M463.9 265.2l10.8 -4.2M465.9 264.5l10.8 -4.2M467.9 263.9l10.8 -4.2M470.0 263.3l10.8 -4.2M472.1 262.7l10.8 -4.2M474.3 262.2l10.8 -4.2M476.5 261.6l10.8 -4.2M478.7 261.2l10.8 -4.2M481.0 260.7l10.8 -4.2M483.3 260.3l10.8 -4.2M485.7 259.9l10.8 -4.2M488.1 259.5l10.8 -4.2M490.5 259.1l10.8 -4.2M492.9 258.8l10.8 -4.2M495.4 258.6l10.8 -4.2M497.8 258.3l10.8 -4.2M500.3 258.1l10.8 -4.2M502.8 257.9l10.8 -4.2M505.3 257.8l10.8 -4.2M507.9 257.6l10.8 -4.2M510.4 257.6l10.8 -4.2M513.0 257.5l10.8 -4.2M515.5 257.5l10.8 -4.2M518.0 257.5l10.8 -4.2M520.6 257.6l10.8 -4.2M523.1 257.6l10.8 -4.2M525.7 257.8l10.8 -4.2M528.2 257.9l10.8 -4.2M530.7 258.1l10.8 -4.2M533.2 258.3l10.8 -4.2M535.6 258.6l10.8 -4.2M538.1 258.8l10.8 -4.2M540.5 259.1l10.8 -4.2M542.9 259.5l10.8 -4.2M545.3 259.9l10.8 -4.2M547.7 260.3l10.8 -4.2M550.0 260.7l10.8 -4.2M552.3 261.2l10.8 -4.2M554.5 261.6l10.8 -4.2M556.7 262.2l10.8 -4.2M558.9 262.7l10.8 -4.2M561.0 263.3l10.8 -4.2M563.1 263.9l10.8 -4.2M565.1 264.5l10.8 -4.2M567.1 265.2l10.8 -4.2M569.1 265.9l10.8 -4.2M570.9 266.6l10.8 -4.2M572.8 267.3l10.8 -4.2M574.5 268.1l10.8 -4.2M576.3 268.8l10.8 -4.2M577.9 269.6l10.8 -4.2M579.5 270.5l10.8 -4.2M581.0 271.3l10.8 -4.2M582.5 272.2l10.8 -4.2M583.9 273.0l10.8 -4.2M585.2 273.9l10.8 -4.2M586.5 274.9l10.8 -4.2M587.7 275.8l10.8 -4.2M588.8 276.7l10.8 -4.2M589.8 277.7l10.8 -4.2M590.8 278.7l10.8 -4.2M591.7 279.7l10.8 -4.2M592.5 280.6l10.8 -4.2M593.3 281.7l10.8 -4.2M594.0 282.7l10.8 -4.2M594.5 283.7l10.8 -4.2M595.1 284.7l10.8 -4.2M595.5 285.8l10.8 -4.2M595.9 286.8l10.8 -4.2M596.1 287.8l10.8 -4.2M596.3 288.9l10.8 -4.2M596.5 289.9l10.8 -4.2" stroke="#00ff00" stroke-width="1.8"/></g>
<!-- cone -->
<path d="M506 222 L548 306 Q515 322 481 310 Z" fill="url(#cone)"/>
<!-- cframe -->
<g stroke-width="1.6" fill="none">
<path d="M462.6 271.0l10 -3.8" stroke="#00ff00"/>
<path d="M465.6 272.0l0.8 22" stroke="#0000ff" stroke-width="1.5"/>
<path d="M470.8 274.1l10 -3.8" stroke="#00ff00"/>
<path d="M473.8 275.1l0.8 22" stroke="#0000ff" stroke-width="1.5"/>
<path d="M479.0 277.3l10 -3.8" stroke="#00ff00"/>
<path d="M482.0 278.3l0.8 22" stroke="#0000ff" stroke-width="1.5"/>
<path d="M487.2 280.4l10 -3.8" stroke="#00ff00"/>
<path d="M490.2 281.4l0.8 22" stroke="#0000ff" stroke-width="1.5"/>
<path d="M495.4 283.5l10 -3.8" stroke="#00ff00"/>
<path d="M498.4 284.5l0.8 22" stroke="#0000ff" stroke-width="1.5"/>
<path d="M503.6 286.7l10 -3.8" stroke="#00ff00"/>
<path d="M506.6 287.7l0.8 22" stroke="#0000ff" stroke-width="1.5"/>
<path d="M462.6 271L511.8 289.8" stroke="#ff0000" stroke-width="2"/>
<path d="M511.8 289.8L534 281.5" stroke="#00ff00" stroke-width="2"/>
<path d="M512 290L514.5 312" stroke="#0000ff" stroke-width="2"/>
</g>
<path d="M541 279 L530 278 L533 287 Z" fill="#00ff00"/>
<path d="M515 320 L510 309 L519 309 Z" fill="#0000ff"/>
<path d="M486 280 L495 278 L493 286 Z" fill="#ff0000"/>
</svg>
<div id="tb"><svg width="655" height="43" style="position:absolute;left:0;top:0">
<defs>
<linearGradient id="fold" x1="0" y1="0.2" x2="1" y2="0"><stop offset="0" stop-color="#2aa4e4"/><stop offset="0.45" stop-color="#2a9ee0"/><stop offset="0.75" stop-color="#0a3a80"/><stop offset="1" stop-color="#020a20"/></linearGradient>
<linearGradient id="foldf" x1="0" y1="0" x2="1" y2="1"><stop offset="0" stop-color="#2a3a48"/><stop offset="0.5" stop-color="#0a1018"/><stop offset="1" stop-color="#000"/></linearGradient>
<radialGradient id="glob" cx="0.45" cy="0.28" r="0.8"><stop offset="0" stop-color="#d8e0f6"/><stop offset="0.3" stop-color="#8aa0e0"/><stop offset="0.6" stop-color="#2a4aa8"/><stop offset="1" stop-color="#182878"/></radialGradient>
<linearGradient id="gplus" x1="0" y1="0" x2="0" y2="1"><stop offset="0" stop-color="#008a00"/><stop offset="1" stop-color="#20d020"/></linearGradient>
<linearGradient id="fwd" x1="0" y1="0" x2="0" y2="1"><stop offset="0" stop-color="#8cd8ff"/><stop offset="1" stop-color="#2a98e8"/></linearGradient>
<linearGradient id="boxg" x1="0" y1="0" x2="0" y2="1"><stop offset="0" stop-color="#ffe070"/><stop offset="1" stop-color="#f0b020"/></linearGradient>
</defs>
<rect x="0" y="41" width="655" height="1" fill="#c4c4c4"/>
<rect x="0" y="42" width="655" height="1" fill="#8a8a98"/>
<!-- separators -->
<g fill="#d4d4d4">
<rect x="127" y="0" width="1" height="41"/><rect x="219" y="0" width="1" height="41"/><rect x="311" y="0" width="1" height="41"/>
<rect x="380" y="0" width="1" height="41"/><rect x="438" y="0" width="1" height="41"/><rect x="488" y="0" width="1" height="41"/>
<rect x="546" y="0" width="1" height="41"/><rect x="604" y="0" width="1" height="41"/>
</g>
<g stroke="#bcbcbc" stroke-width="1" stroke-dasharray="1 2.5">
<path d="M131.5 2V39M223.5 2V39M315.5 2V39M383.5 2V39M442.5 2V39M492.5 2V39M550.5 2V39M608.5 2V39"/>
</g>
<!-- folder -->
<path d="M11.5 9.5 L27 7.5 L28.5 5 L39.5 4.2 L38 36 L11 30 Z" fill="url(#fold)"/>
<path d="M4 18 L30 20 L36.5 36.5 L9 32.5 Z" fill="url(#foldf)"/>
<!-- globe -->
<circle cx="63.6" cy="20.3" r="18" fill="url(#glob)" stroke="#1a2a70" stroke-width="0.8"/>
<path d="M60 12 Q64 9 70 10 Q74 11 76 14 Q73 16 72 19 Q70 20 69 22 L68 27 Q66 30 65 31 Q63 28 63 24 Q60 23 59 20 Q57 18 58 15 Z" fill="#f0f2fa"/>
<path d="M71 21 Q75 20 77 23 Q77 27 75 28 Q73 26 71 24 Z" fill="#e0e6f6"/>
<path d="M48 17 Q52 16 55 19 Q55 24 52 27 Q49 26 48 22 Z" fill="#c8d2f0"/>
<!-- floppy -->
<path d="M92 7.5 H114 L119 12 V33 H92 Z" fill="#4a7ad0"/>
<rect x="97.5" y="8.5" width="15" height="7" fill="#b4b4b4"/>
<rect x="106" y="9.5" width="3" height="5" fill="#4a7ad0"/>
<rect x="97" y="21" width="15.5" height="11.5" fill="#d8d8d8"/>
<path d="M97 24h15.5M97 27h15.5M97 30h15.5" stroke="#b8b8b8" stroke-width="0.8"/>
<!-- undo -->
<g fill="none" stroke-linecap="butt">
<path d="M156.4 12.8 A10 10 0 1 1 151.3 28.9" stroke="#8a8a8a" stroke-width="9"/>
<path d="M156.4 12.8 A10 10 0 1 1 151.3 28.9" stroke="#a8a8a8" stroke-width="7"/>
<path d="M196.9 12.8 A10 10 0 1 0 202 28.9" stroke="#8a8a8a" stroke-width="9"/>
<path d="M196.9 12.8 A10 10 0 1 0 202 28.9" stroke="#a8a8a8" stroke-width="7"/>
</g>
<g fill="#acacac" stroke="#8a8a8a" stroke-width="0.8">
<path d="M139 19 L146 4 L159 18.5 Z"/>
<path d="M213 21 L204.6 4 L194.5 18 Z"/>
</g>
<!-- add frame -->
<path d="M238 3.5h4.5v8h7.5v4.8h-7.5v7.4h-4.5v-7.4h-8v-4.8h8z" fill="url(#gplus)"/>
<path d="M253 26.5V10" stroke="#2a30e0" stroke-width="3.5"/>
<path d="M254.5 3L258 11H251Z" fill="#3a40f0"/>
<path d="M254.3 27.2L236 30.5" stroke="#f05060" stroke-width="3.5"/>
<path d="M229.3 32L237 27L238 34Z" fill="#f05060"/>
<path d="M254.3 27.2L262 35" stroke="#50b890" stroke-width="3"/>
<path d="M265.3 37.8L258 34.5L262.5 31Z" fill="#60d0a0"/>
<!-- target -->
<ellipse cx="284" cy="26.4" rx="12.7" ry="11" fill="#d81818"/>
<ellipse cx="284" cy="25.8" rx="9.5" ry="8" fill="#f4f4f4"/>
<ellipse cx="284" cy="25.6" rx="6.8" ry="5.7" fill="#e01c1c"/>
<ellipse cx="284" cy="25.4" rx="4" ry="3.3" fill="#f4f4f4"/>
<ellipse cx="284" cy="25.4" rx="1.8" ry="1.5" fill="#e01c1c"/>
<path d="M280 3.5h4.3v7.8h7.8v4.8h-7.8v7.5h-4.3v-7.5h-8v-4.8h8z" fill="url(#gplus)"/>
<path d="M287 24L302 8" stroke="#8cb820" stroke-width="1.8"/>
<ellipse cx="304.5" cy="5.5" rx="4.5" ry="2.5" transform="rotate(-45 304.5 5.5)" fill="#a8c828"/>
<!-- fit -->
<rect x="323.5" y="3.5" width="32.5" height="33" rx="2.5" fill="#eaf0f0" stroke="#a8a8a8"/>
<defs>
<linearGradient id="fa1" x1="0" y1="0" x2="1" y2="1"><stop offset="0.35" stop-color="#1e4c9a"/><stop offset="1" stop-color="#1e4c9a" stop-opacity="0"/></linearGradient>
<linearGradient id="fa2" x1="1" y1="0" x2="0" y2="1"><stop offset="0.35" stop-color="#1e4c9a"/><stop offset="1" stop-color="#1e4c9a" stop-opacity="0"/></linearGradient>
<linearGradient id="fa3" x1="0" y1="1" x2="1" y2="0"><stop offset="0.35" stop-color="#1e4c9a"/><stop offset="1" stop-color="#1e4c9a" stop-opacity="0"/></linearGradient>
<linearGradient id="fa4" x1="1" y1="1" x2="0" y2="0"><stop offset="0.35" stop-color="#1e4c9a"/><stop offset="1" stop-color="#1e4c9a" stop-opacity="0"/></linearGradient>
</defs>
<path d="M325.5 5.5h10.5l-2.5 2.5l5.5 5.5l-4 4l-5.5-5.5l-4 4z" fill="url(#fa1)"/>
<path d="M354 5.5h-10.5l2.5 2.5l-5.5 5.5l4 4l5.5-5.5l4 4z" fill="url(#fa2)"/>
<path d="M325.5 34.5h10.5l-2.5-2.5l5.5-5.5l-4-4l-5.5 5.5l-4-4z" fill="url(#fa3)"/>
<path d="M354 34.5h-10.5l2.5-2.5l-5.5-5.5l4-4l5.5 5.5l4-4z" fill="url(#fa4)"/>
<!-- chevrons -->
<path d="M373.0 18.8l2.2 2.2l-2.2 2.2M375.6 18.8l2.2 2.2l-2.2 2.2M431.5 18.8l2.2 2.2l-2.2 2.2M434.1 18.8l2.2 2.2l-2.2 2.2M539.5 18.8l2.2 2.2l-2.2 2.2M542.1 18.8l2.2 2.2l-2.2 2.2M597.5 18.8l2.2 2.2l-2.2 2.2M600.1 18.8l2.2 2.2l-2.2 2.2" stroke="#111" stroke-width="1.3" fill="none"/>
<!-- highlighted select -->
<rect x="387.5" y="0.5" width="41.5" height="40" fill="#c4dcf4" stroke="#a4c8ec"/>
<path d="M394.6 4.4V31.1L402.2 24.8L407.3 36.8L409.8 35.5L405.4 24.1H414.3Z" fill="#c4dcf4" stroke="#1a1a1a" stroke-width="1.4" stroke-linejoin="miter"/>
<path d="M414 9.5l6.2 6.4M420.2 9.5l-6.2 6.4" stroke="#e05858" stroke-width="2.2"/>
<!-- nuclear -->
<circle cx="465.8" cy="19.3" r="15.8" fill="#141414"/>
<g fill="#e0b428">
<path d="M465.8 19.3L458 6.5A15 15 0 0 1 473.6 6.5Z"/>
<path d="M465.8 19.3L451 19.3A14.8 14.8 0 0 0 458.4 32.2Z" />
<path d="M465.8 19.3L480.6 19.3A14.8 14.8 0 0 1 473.2 32.2Z"/>
</g>
<circle cx="465.8" cy="19.3" r="3" fill="#141414"/>
<path d="M469 23.5l12 11.5M481 23.5l-12 11.5" stroke="#d81818" stroke-width="4.2"/>
<!-- forward -->
<ellipse cx="516" cy="31.5" rx="11" ry="1.5" fill="#c8c8c8"/>
<path d="M505 14V28.1L516.2 21ZM516.2 14V28.1L527.3 21Z" fill="url(#fwd)"/>
<!-- python -->
<path d="M566 5 Q571 4 577 5 Q582 6 582 11 V19 Q582 24 577 24 H569 Q564 24 564 29 H560 Q557 28 557 21 Q557 15 562 15 H574 V13 H566 Z" fill="#4a78b0"/>
<path d="M582 36 Q577 37 571 36 Q566 35 566 30 V22 Q566 17 571 17 H579 Q584 17 584 12 H588 Q591 13 591 20 Q591 26 586 26 H574 V28 H582 Z" fill="#f2ce40" stroke="#d8a820" stroke-width="0.6"/>
<path d="M565 3.8h4.3v7.5h7.6v4.8h-7.6v7.5h-4.3v-7.5h-8v-4.8h8z" fill="url(#gplus)"/>
<!-- box -->
<path d="M620 16 L633 24 L633 36.5 L622 31 Z" fill="#f4bc30"/>
<path d="M633 24 L647 17 L646 30 L633 36.5 Z" fill="#f8cc48"/>
<path d="M620 16 L633 10 L647 17 L633 24 Z" fill="#e8a828"/>
<path d="M620 16 L622 6 L635 3 L633 10 Z" fill="#ffe27a"/>
<path d="M633 10 L640 4 L649 12 L647 17 Z" fill="#ffd860"/>
<path d="M615 13 L620 16 L627 24 L618 20 Z" fill="#ffd050"/>
<path d="M647 17 L650 18 L640 24 L633 24 Z" fill="#ffd050"/>
</svg>
</div>
<svg width="655" height="595" style="position:absolute;left:0;top:0">
<defs><linearGradient id="stg" x1="0" y1="0" x2="1" y2="0"><stop offset="0" stop-color="#fff"/><stop offset="0.45" stop-color="#e8eef8"/><stop offset="0.55" stop-color="#8cc0f0"/><stop offset="1" stop-color="#2a7ad8"/></linearGradient>
<radialGradient id="ball" cx="0.4" cy="0.35" r="0.65"><stop offset="0" stop-color="#d0ffb0"/><stop offset="0.5" stop-color="#40d020"/><stop offset="1" stop-color="#109010"/></radialGradient>
<linearGradient id="cubeg" x1="0" y1="0" x2="0" y2="1"><stop offset="0" stop-color="#d0ecff"/><stop offset="0.5" stop-color="#80c0f0"/><stop offset="1" stop-color="#2a88e0"/></linearGradient>
<radialGradient id="tgtg" cx="0.5" cy="0.5" r="0.5"><stop offset="0" stop-color="#f04040"/><stop offset="1" stop-color="#b01010"/></radialGradient>
<g id="ic-station"><path d="M1.5 1 H10.8 V13.9 H1.2 V10 L2.5 9 Z" fill="url(#stg)"/></g>
<g id="ic-frame" fill="none"><path d="M7.2 10.5V2.5" stroke="#3040ff" stroke-width="1.3"/><path d="M7.2 0.8l-1.5 2.6h3z" fill="#3040ff"/><path d="M7.2 10.5L-1.5 12" stroke="#e03040" stroke-width="1.5"/><path d="M7.2 10.5L11 13.6" stroke="#30b070" stroke-width="1.4"/></g>
<g id="ic-robot" fill="none" stroke="#e87020" stroke-linecap="round"><ellipse cx="5.5" cy="13" rx="3" ry="1.1" fill="#303030" stroke="none"/><path d="M0 2.3 L8.8 1.6" stroke-width="2.3"/><path d="M8 2.5 L3.5 8.3" stroke-width="2.4"/><path d="M3.8 8.5 Q6 9 6.5 11.5" stroke-width="3"/></g>
<g id="ic-tool"><path d="M-1.9 1.6 L1.5 0.8 L10.7 10.8 L9 11.5 L3 6 L7.3 13.7 L5.5 14 L-0.5 6 Z" fill="#a8a8c8"/><circle cx="0.8" cy="6.2" r="3.1" fill="url(#ball)"/></g>
<g id="ic-frame2" fill="none"><path d="M7.2 10.4V2.5" stroke="#3040ff" stroke-width="1.3"/><path d="M7.2 0.7l-1.5 2.6h3z" fill="#3040ff"/><path d="M7.2 10.4L-2.5 12" stroke="#e03040" stroke-width="1.5"/><path d="M7.2 10.4L11 13.5" stroke="#30b070" stroke-width="1.4"/><circle cx="0.5" cy="5.8" r="3.3" fill="url(#ball)"/></g>
<g id="ic-cube"><path d="M-2.5 4 L6 0.3 L11.1 3 L11 10.5 L2.5 14.1 L-2.2 11.5 Z" fill="url(#cubeg)"/><path d="M-2.5 4 L6 0.3 L11.1 3 L2.7 6.8 Z" fill="#c8e6fc"/><path d="M2.7 6.8 L11.1 3 L11 10.5 L2.5 14.1 Z" fill="#4a9ae8" opacity="0.6"/></g>
<g id="ic-target"><circle cx="1.9" cy="9.6" r="5" fill="url(#tgtg)"/><circle cx="1.9" cy="9.6" r="3.3" fill="#f4d0d0"/><circle cx="1.9" cy="9.6" r="2" fill="#d82020"/><path d="M2.5 9L9.5 1.8" stroke="#90c030" stroke-width="1.2"/><ellipse cx="10.4" cy="1" rx="1.6" ry="1" transform="rotate(-45 10.4 1)" fill="#b0d040"/></g>
<g id="ic-prog"><path d="M-1.6 0.4 H7 L10.1 3 V14.4 H-1.6 Z" fill="#f0f0f0"/><path d="M4 0.4 H7 L10.1 3 H4Z" fill="#a080e8"/><path d="M0.3 5h8M0.3 7.2h8M0.3 9.4h8M0.3 11.6h8" stroke="#b0b0b0" stroke-width="1.1"/></g>
<g id="ic-call"><path d="M3.5 2.5h8M3.5 4.5h8M3.5 6.5h8" stroke="#a8acb8" stroke-width="1.4"/><path d="M-2.3 8.6h8M-2.3 10.6h8M-2.3 12.6h8" stroke="#a8acb8" stroke-width="1.4"/><path d="M-2 1.5 Q1.5 1 2 4" stroke="#e8d060" stroke-width="1.5" fill="none"/><path d="M-2 1.5h4" stroke="#a8acb8" stroke-width="1"/></g>
<g id="ic-python"><path d="M3 1.6 Q7 0.5 8.5 2.5 V6 H4.5 V7 H9.5 V8.5 H3 Q-2.2 8.5 -2.2 6 Q-2.5 2 3 1.6Z" fill="#4a7cb8"/><path d="M8.5 14.6 Q4.5 15.8 3 13.5 V10 H7 V9 H2 V7.5 H8.5 Q13.5 7.5 11.2 12.5 Q10.5 14.5 8.5 14.6Z" fill="#f0c830"/></g>
</defs>
<rect x="19" y="79" width="1" height="249" fill="#8a8ab0"/>
<rect x="19" y="390" width="1" height="92" fill="#8a8ab0"/>
<rect x="33" y="95" width="1" height="18" fill="#8a8ab0"/>
<rect x="46" y="95" width="1" height="9" fill="#8a8ab0"/>
<rect x="46" y="104" width="7" height="1" fill="#8a8ab0"/>
<rect x="46" y="128" width="1" height="189" fill="#8a8ab0"/>
<rect x="46" y="136" width="7" height="1" fill="#8a8ab0"/>
<rect x="46" y="153" width="7" height="1" fill="#8a8ab0"/>
<rect x="46" y="169" width="7" height="1" fill="#8a8ab0"/>
<rect x="46" y="185" width="7" height="1" fill="#8a8ab0"/>
<rect x="46" y="202" width="7" height="1" fill="#8a8ab0"/>
<rect x="46" y="218" width="7" height="1" fill="#8a8ab0"/>
<rect x="46" y="235" width="7" height="1" fill="#8a8ab0"/>
<rect x="46" y="251" width="7" height="1" fill="#8a8ab0"/>
<rect x="46" y="267" width="7" height="1" fill="#8a8ab0"/>
<rect x="46" y="284" width="7" height="1" fill="#8a8ab0"/>
<rect x="46" y="300" width="7" height="1" fill="#8a8ab0"/>
<rect x="46" y="317" width="7" height="1" fill="#8a8ab0"/>
<rect x="33" y="391" width="1" height="74" fill="#8a8ab0"/>
<rect x="33" y="399" width="7" height="1" fill="#8a8ab0"/>
<rect x="33" y="415" width="7" height="1" fill="#8a8ab0"/>
<rect x="33" y="432" width="7" height="1" fill="#8a8ab0"/>
<rect x="33" y="448" width="7" height="1" fill="#8a8ab0"/>
<rect x="33" y="465" width="7" height="1" fill="#8a8ab0"/>
<rect x="19" y="481" width="7" height="1" fill="#8a8ab0"/>
<path d="M0.0 52.8h11l-5.5 6.2z" fill="#fff"/>
<g transform="translate(17.6 47.5)"><use href="#ic-station"/></g>
<path d="M13.7 69.2h11l-5.5 6.2z" fill="#fff"/>
<g transform="translate(31.3 63.9)"><use href="#ic-frame"/></g>
<path d="M27.4 85.6h11l-5.5 6.2z" fill="#fff"/>
<g transform="translate(45.0 80.3)"><use href="#ic-robot"/></g>
<g transform="translate(58.7 96.8)"><use href="#ic-tool"/></g>
<path d="M27.4 118.5h11l-5.5 6.2z" fill="#fff"/>
<g transform="translate(45.0 113.2)"><use href="#ic-frame2"/></g>
<g transform="translate(58.7 129.6)"><use href="#ic-cube"/></g>
<g transform="translate(58.7 146.0)"><use href="#ic-target"/></g>
<g transform="translate(58.7 162.4)"><use href="#ic-target"/></g>
<g transform="translate(58.7 178.9)"><use href="#ic-target"/></g>
<g transform="translate(58.7 195.3)"><use href="#ic-target"/></g>
<g transform="translate(58.7 211.7)"><use href="#ic-target"/></g>
<g transform="translate(58.7 228.1)"><use href="#ic-target"/></g>
<g transform="translate(58.7 244.5)"><use href="#ic-target"/></g>
<g transform="translate(58.7 261.0)"><use href="#ic-target"/></g>
<g transform="translate(58.7 277.4)"><use href="#ic-target"/></g>
<g transform="translate(58.7 293.8)"><use href="#ic-target"/></g>
<g transform="translate(58.7 310.2)"><use href="#ic-target"/></g>
<path d="M16.7 328.6v11l6.5-5.5z" fill="#fff"/>
<g transform="translate(31.3 326.6)"><use href="#ic-prog"/></g>
<path d="M16.7 345.1v11l6.5-5.5z" fill="#fff"/>
<g transform="translate(31.3 343.1)"><use href="#ic-prog"/></g>
<path d="M16.7 361.5v11l6.5-5.5z" fill="#fff"/>
<g transform="translate(31.3 359.5)"><use href="#ic-prog"/></g>
<path d="M13.7 381.2h11l-5.5 6.2z" fill="#fff"/>
<g transform="translate(31.3 375.9)"><use href="#ic-prog"/></g>
<g transform="translate(45.0 392.3)"><use href="#ic-call"/></g>
<g transform="translate(45.0 408.7)"><use href="#ic-call"/></g>
<g transform="translate(45.0 425.2)"><use href="#ic-call"/></g>
<g transform="translate(45.0 441.6)"><use href="#ic-call"/></g>
<g transform="translate(45.0 458.0)"><use href="#ic-call"/></g>
<g transform="translate(31.3 474.4)"><use href="#ic-python"/></g>
</svg>
<div id="tree">
<div class="r" style="left:33.6px;top:50.30px">Painting Test</div>
<div class="r" style="left:47.3px;top:66.72px">UR10 Base</div>
<div class="r" style="left:61.0px;top:83.14px">UR10</div>
<div class="r" style="left:74.7px;top:99.56px">Paint gun</div>
<div class="r" style="left:61.0px;top:115.98px">Frame 2</div>
<div class="r" style="left:74.7px;top:132.40px">Object Inspection</div>
<div class="r" style="left:74.7px;top:148.82px">Home</div>
<div class="r" style="left:74.7px;top:165.24px">Approach</div>
<div class="r" style="left:74.7px;top:181.66px">Top Paint 1</div>
<div class="r" style="left:74.7px;top:198.08px">Top Paint 2</div>
<div class="r" style="left:74.7px;top:214.50px">Top Paint 3</div>
<div class="r" style="left:74.7px;top:230.92px">Top Paint 4</div>
<div class="r" style="left:74.7px;top:247.34px">Top Paint 5</div>
<div class="r" style="left:74.7px;top:263.76px">Top Paint 6</div>
<div class="r" style="left:74.7px;top:280.18px">Top Paint 7</div>
<div class="r" style="left:74.7px;top:296.60px">Top Paint 8</div>
<div class="r" style="left:74.7px;top:313.02px">Retract</div>
<div class="r" style="left:47.3px;top:329.44px">ApproachMove</div>
<div class="r" style="left:47.3px;top:345.86px">PaintTop</div>
<div class="r" style="left:47.3px;top:362.28px">Retract</div>
<div class="r" style="left:47.3px;top:378.70px">MainProg</div>
<div class="r" style="left:61.0px;top:395.12px">Call ApproachMove</div>
<div class="r" style="left:61.0px;top:411.54px">Call SprayOn(1)</div>
<div class="r" style="left:61.0px;top:427.96px">Call PaintTop</div>
<div class="r" style="left:61.0px;top:444.38px">Call SprayOn(0)</div>
<div class="r" style="left:61.0px;top:460.80px">Call Retract</div>
<div class="r" style="left:47.3px;top:477.22px">SprayOn</div>
</div>
</div>
<div id="sep"></div>
<div id="ml">
<div id="mtb"><svg width="367" height="66" viewBox="657 0 367 66" style="position:absolute;left:0;top:0">
<defs>
<linearGradient id="plusg" x1="0" y1="0" x2="0" y2="1"><stop offset="0" stop-color="#fff8c0"/><stop offset="1" stop-color="#e8c030"/></linearGradient>
<linearGradient id="foldy" x1="0" y1="0" x2="0" y2="1"><stop offset="0" stop-color="#fff2b0"/><stop offset="1" stop-color="#e0c060"/></linearGradient>
<linearGradient id="bluea" x1="0" y1="0" x2="0" y2="1"><stop offset="0" stop-color="#c8e4f8"/><stop offset="1" stop-color="#5a9ad0"/></linearGradient>
</defs>
<rect x="657" y="54" width="367" height="12" fill="#d6d6d6"/>
<rect x="657" y="54" width="367" height="1" fill="#e2e2e2"/>
<rect x="725" y="0" width="299" height="2" fill="#284a7c"/>
<g fill="#c2c2c2"><rect x="806" y="4" width="1" height="60"/><rect x="859" y="4" width="1" height="60"/><rect x="964" y="4" width="1" height="60"/><rect x="1015" y="4" width="1" height="60"/></g>
<g fill="#e8e8e8"><rect x="807" y="4" width="1" height="60"/><rect x="860" y="4" width="1" height="60"/><rect x="965" y="4" width="1" height="60"/><rect x="1016" y="4" width="1" height="60"/></g>
<!-- shadows -->
<g fill="#000" opacity="0.12"><ellipse cx="671" cy="25" rx="7" ry="1.5"/><ellipse cx="699" cy="24" rx="7" ry="1.5"/><ellipse cx="726.5" cy="25" rx="7" ry="1.5"/></g>
<!-- New -->
<path d="M668.5 8h5v5.5h5.5v5h-5.5v5.5h-5v-5.5h-5v-5h5z" fill="url(#plusg)" stroke="#b89020" stroke-width="0.8"/>
<!-- Open -->
<path d="M691 12h5l1.5 1.5h7.5v9h-14z" fill="url(#foldy)" stroke="#a08030" stroke-width="0.8"/>
<!-- Save -->
<rect x="719" y="8" width="15" height="15" fill="#404040" rx="1"/>
<rect x="721.5" y="9" width="10" height="5.5" fill="#e8e8e8"/>
<rect x="722" y="17" width="9" height="6" fill="#f0f0f0"/>
<rect x="723.5" y="18" width="2" height="4" fill="#404040"/>
<!-- Find files / compare / print icons -->
<path d="M744.5 8h4l1 1h5.5v8h-10.5z" fill="url(#foldy)" stroke="#a08030" stroke-width="0.7"/>
<circle cx="751" cy="14" r="2.6" fill="#d0e8f8" stroke="#3a70b0" stroke-width="1"/>
<path d="M752.8 15.8l2.2 2.2" stroke="#3a70b0" stroke-width="1.3"/>
<rect x="744.5" y="26" width="6.5" height="8" fill="#f4f4f4" stroke="#9a9a9a" stroke-width="0.7"/>
<rect x="748.5" y="23.5" width="6.5" height="8" fill="#fafafa" stroke="#9a9a9a" stroke-width="0.7"/>
<rect x="745" y="44" width="10" height="5" fill="#a8a8a8" stroke="#707070" stroke-width="0.6"/>
<rect x="747" y="40.5" width="6" height="4" fill="#f8f8f8" stroke="#888" stroke-width="0.5"/>
<rect x="747" y="48" width="6" height="2.5" fill="#c8e0f8"/>
<!-- Nav icons -->
<path d="M812 12l5-4.5v2.8h6v3.6h-6v2.8z" fill="url(#bluea)" stroke="#4a80b8" stroke-width="0.6"/>
<path d="M839 12l-5-4.5v2.8h-6v3.6h6v2.8z" fill="#f0f0f0" stroke="#c8c8c8" stroke-width="0.6"/>
<path d="M820 28.5l-5-4.5v2.8h-3v3.6h3v2.8z" fill="url(#bluea)" stroke="#4a80b8" stroke-width="0.6"/>
<rect x="820.5" y="24" width="2" height="9.5" fill="#4a88c8"/>
<circle cx="817" cy="45" r="3.4" fill="#e0f0fc" stroke="#4a80b8" stroke-width="1.1"/>
<path d="M819.5 47.5l3 3" stroke="#3a70b0" stroke-width="1.6"/>
<!-- Edit icons -->
<rect x="902" y="7.5" width="10" height="8" fill="#e8e890" stroke="#90a040" stroke-width="0.6"/>
<path d="M904 10h6M904 12h6" stroke="#8a8a50" stroke-width="0.7"/>
<path d="M910.5 13l2.5 2.5l-2.5 2.5l-2.5-2.5z" fill="#f0b830"/>
<text x="920" y="16" font-family="Liberation Serif" font-style="italic" font-size="10" fill="#202020">fx</text>
<rect x="935.5" y="7.5" width="10" height="9.5" fill="#fafafa" stroke="#505050" stroke-width="0.7"/>
<path d="M936 15l3-3h2v-2h3v-2" stroke="#3a80d0" stroke-width="1.2" fill="none"/>
<text x="903" y="33" font-family="Liberation Sans" font-size="11" font-weight="bold" fill="#58b040">%</text>
<text x="919" y="32" font-family="Liberation Sans" font-size="9" font-weight="bold" fill="#90c880">%</text>
<path d="M923 29l5 5M928 29l-5 5" stroke="#4a88c8" stroke-width="2"/>
<text x="935" y="28.5" font-family="Liberation Sans" font-size="6" font-weight="bold" fill="#58b040">%</text>
<text x="935" y="34" font-family="Liberation Sans" font-size="6" font-weight="bold" fill="#58b040">%</text>
<path d="M945 26v6l-2 1.5" stroke="#707070" stroke-width="1" fill="none"/>
<rect x="902" y="40.5" width="10.5" height="10" fill="#a8d888" stroke="#5a9a40" stroke-width="0.6"/>
<path d="M906 42.5h2.5l-1 3l1.5 1l-2 2.5" stroke="#fff" stroke-width="1.1" fill="none"/>
<rect x="919.5" y="40.5" width="9.5" height="10" fill="#f4f4f4" stroke="#b0b0b0" stroke-width="0.6"/>
<path d="M919 45.5h5" stroke="#40a030" stroke-width="2"/><path d="M918 45.5l2.5-2.5v5z" fill="#40a030"/>
<rect x="935.5" y="40.5" width="9.5" height="10" fill="#f4f4f4" stroke="#b0b0b0" stroke-width="0.6"/>
<path d="M940 45.5h5" stroke="#40a030" stroke-width="2"/><path d="M946.5 45.5l-2.5-2.5v5z" fill="#40a030"/>
<!-- Breakpoints icon -->
<rect x="981.5" y="7.5" width="16" height="16" fill="#f2f2f2" stroke="#8a8a8a" stroke-width="0.8"/>
<circle cx="984.5" cy="12.5" r="1.6" fill="#d84848"/><circle cx="984.5" cy="17.5" r="1.6" fill="#d84848"/>
<path d="M988 10h6M990 12h4M989 14h5M991 16h3M989 18h5M988 20h6" stroke="#8a8a8a" stroke-width="0.6"/>
<!-- arrows -->
<g fill="#111">
<path d="M668.6 44h5l-2.5 3z"/><path d="M697.4 44h5l-2.5 3z"/><path d="M724 44h5l-2.5 3z"/>
<path d="M795.5 27.8h5l-2.5 3z"/><path d="M780.3 43.8h5l-2.5 3z"/>
<path d="M850.6 27.8h5l-2.5 3z"/><path d="M847.3 43.8h5l-2.5 3z"/>
<path d="M953.3 11h5l-2.5 2.6z"/><path d="M987.5 44h5l-2.5 3z"/>
</g>
<!-- labels -->
<g font-family="Liberation Sans" font-size="7.1" fill="#1c1c1c">
<text x="671.2" y="38.3" text-anchor="middle">New</text>
<text x="699.2" y="38.3" text-anchor="middle">Open</text>
<text x="726.6" y="38.3" text-anchor="middle">Save</text>
<text x="758.2" y="15.1">Find Files</text>
<text x="758.2" y="31.6">Compare</text>
<text x="758.2" y="47.6">Print</text>
<text x="825.9" y="31.6">Go To</text>
<text x="825.9" y="47.6">Find</text>
<text x="896.6" y="14.5" text-anchor="end">Insert</text>
<text x="896.6" y="30.9" text-anchor="end">Comment</text>
<text x="896.6" y="47.3" text-anchor="end">Indent</text>
<text x="990" y="38.3" text-anchor="middle" font-size="7.35">Breakpoints</text>
</g>
<g font-family="Liberation Sans" font-size="6.6" fill="#9a9a9a">
<text x="730.3" y="62.4" text-anchor="middle">FILE</text>
<text x="832.6" y="62.4" text-anchor="middle">NAVIGATE</text>
<text x="911.5" y="62.4" text-anchor="middle">EDIT</text>
<text x="989.6" y="62.4" text-anchor="middle">BREAKPOINTS</text>
</g>
</svg>
</div>
<div id="code"><div id="gut"></div>
<div class="ln" style="top:1.30px">1</div>
<div class="dash" style="top:6.40px"></div>
<div class="cl" style="top:2.30px">clc</div>
<div class="ln" style="top:13.61px">2</div>
<div class="dash" style="top:18.71px"></div>
<div class="cl" style="top:14.61px">clear</div>
<div class="ln" style="top:25.92px">3</div>
<div class="dash" style="top:31.02px"></div>
<div class="cl" style="top:26.92px">close</div>
<div class="ln" style="top:38.23px">4</div>
<div class="ln" style="top:50.54px">5</div>
<div class="cl" style="top:51.54px"><span class="cm">% Start the RoboDK API for Matlab:</span></div>
<div class="ln" style="top:62.85px">6</div>
<div class="dash" style="top:67.95px"></div>
<div class="cl" style="top:63.85px">RDK = Robolink();</div>
<div class="ln" style="top:75.16px">7</div>
<div class="ln" style="top:87.47px">8</div>
<div class="cl" style="top:88.47px"><span class="cm">% Get the robot item:</span></div>
<div class="ln" style="top:99.78px">9</div>
<div class="dash" style="top:104.88px"></div>
<div class="cl" style="top:100.78px">robot = RDK.Item(<span class="st">''</span>, RDK.ITEM_TYPE_ROBOT);</div>
<div class="ln" style="top:112.09px">10</div>
<div class="ln" style="top:124.40px">11</div>
<div class="cl" style="top:125.40px"><span class="cm">% Get the robot position (simulated or real if we are</span></div>
<div class="ln" style="top:136.71px">12</div>
<div class="cl" style="top:137.71px"><span class="cm">% connected to the robot)</span></div>
<div class="ln" style="top:149.02px">13</div>
<div class="dash" style="top:154.12px"></div>
<div class="cl" style="top:150.02px">poseref = robot.Pose();</div>
<div class="ln" style="top:161.33px">14</div>
<div class="ln" style="top:173.64px">15</div>
<div class="cl" style="top:174.64px"><span class="cm">% Draw a polygon around the retrieved robot position:</span></div>
<div class="ln" style="top:185.95px">16</div>
<div class="dash" style="top:191.05px"></div>
<div class="cl" style="top:186.95px">nsides = 100;</div>
<div class="ln" style="top:198.26px">17</div>
<div class="dash" style="top:203.36px"></div>
<div class="cl" style="top:199.26px"><span class="kw">for</span> i=0:nsides</div>
<div class="ln" style="top:210.57px">18</div>
<div class="dash" style="top:215.67px"></div>
<div class="cl" style="top:211.57px">    ang = i*2*pi/nsides; <span class="cm">% angle: 0, 60, 120, ...</span></div>
<div class="ln" style="top:222.88px">19</div>
<div class="dash" style="top:227.98px"></div>
<div class="cl" style="top:223.88px">    posei = poseref*rotz(ang)*transl(200,0,0)*rotz(-ang);</div>
<div class="ln" style="top:235.19px">20</div>
<div class="dash" style="top:240.29px"></div>
<div class="cl" style="top:236.19px">    robot.MoveL(posei);</div>
<div class="ln" style="top:247.50px">21</div>
<div class="dash" style="top:252.60px"></div>
<div class="cl" style="top:248.50px"><span class="kw">end</span></div>
<div class="ln" style="top:259.81px">22</div>
<div class="ln" style="top:272.12px">23</div>
<div class="cl" style="top:273.12px"><span class="cm">% Move back to the original position:</span></div>
<div class="ln" style="top:284.43px">24</div>
<div class="dash" style="top:289.53px"></div>
<div class="cl" style="top:285.43px">robot.MoveL(poseref);</div>
<div class="ln" style="top:296.74px">25</div>
<div class="ln" style="top:309.05px">26</div>
<div style="position:absolute;left:34.5px;top:200.5px;width:8px;height:8px;border:1px solid #8a8a8a"><div style="position:absolute;left:1px;top:2.5px;width:4px;height:1px;background:#b0b0b0"></div></div>
<div style="position:absolute;left:38px;top:208px;width:1px;height:46px;background:#8a8a8a"></div>
<div style="position:absolute;left:38px;top:253.5px;width:5px;height:1px;background:#8a8a8a"></div>
</div>
</div>
</body></html>
